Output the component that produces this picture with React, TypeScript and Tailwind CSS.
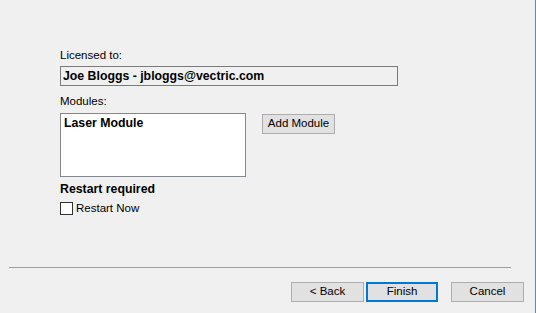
import React from 'react'

function WinButton({ label, focused }: { label: string; focused?: boolean }) {
    return (
        <button
            type="button"
            className={
                focused
                    ? "block h-[20px] w-[72px] border-2 border-[#0078d7] bg-[#e1e1e1] text-[11.5px] leading-none text-black"
                    : "block h-[20px] w-[73px] border border-[#adadad] bg-[#e1e1e1] text-[11.5px] leading-none text-black"
            }
        >
            {label}
        </button>
    )
}

export default function App() {
    return (
        <div
            className="flex h-[313px] w-[536px] flex-col border-r border-[#3b95d6] bg-[#f0f0f0] text-black"
            style={{ fontFamily: '"Liberation Sans", Arial, sans-serif' }}
        >
            <div className="flex flex-col pl-[60px] pt-[48px]">
                <div className="h-[14px] text-[11.5px] leading-[14px]">Licensed to:</div>
                <div className="mt-[4px] flex h-[20px] w-[338px] items-center border border-[#7a7a7a] bg-[#f0f0f0] pl-[2px] text-[12.3px] font-bold">
                    Joe Bloggs - jbloggs@vectric.com
                </div>

                <div className="mt-[8px] h-[14px] text-[11.5px] leading-[14px]">Modules:</div>
                <div className="mt-[5px] flex items-start gap-[16px]">
                    <div className="h-[64px] w-[186px] border border-[#828790] bg-white px-[3px] pt-[2px] text-[12.3px] font-bold leading-[14px]">
                        Laser Module
                    </div>
                    <button
                        type="button"
                        className="mt-[1px] block h-[20px] w-[73px] border border-[#adadad] bg-[#e1e1e1] text-[11.5px] leading-none"
                    >
                        Add Module
                    </button>
                </div>

                <div className="mt-[5px] h-[14px] text-[12.3px] font-bold leading-[14px]">Restart required</div>
                <label className="mt-[6px] flex h-[13px] items-center gap-[3px] text-[11.5px]">
                    <span className="h-[13px] w-[13px] border border-[#333333] bg-white" />
                    <span>Restart Now</span>
                </label>
            </div>

            <div className="mt-auto ml-[9px] h-px w-[502px] shrink-0 bg-[#a0a0a0]" />
            <div className="mt-[14px] flex h-[20px] items-start justify-end pr-[11px] mb-[11px]">
                <div className="flex gap-[2px]">
                    <WinButton label="< Back" />
                    <WinButton label="Finish" focused />
                </div>
                <div className="ml-[13px] flex">
                    <WinButton label="Cancel" />
                </div>
            </div>
        </div>
    )
}
